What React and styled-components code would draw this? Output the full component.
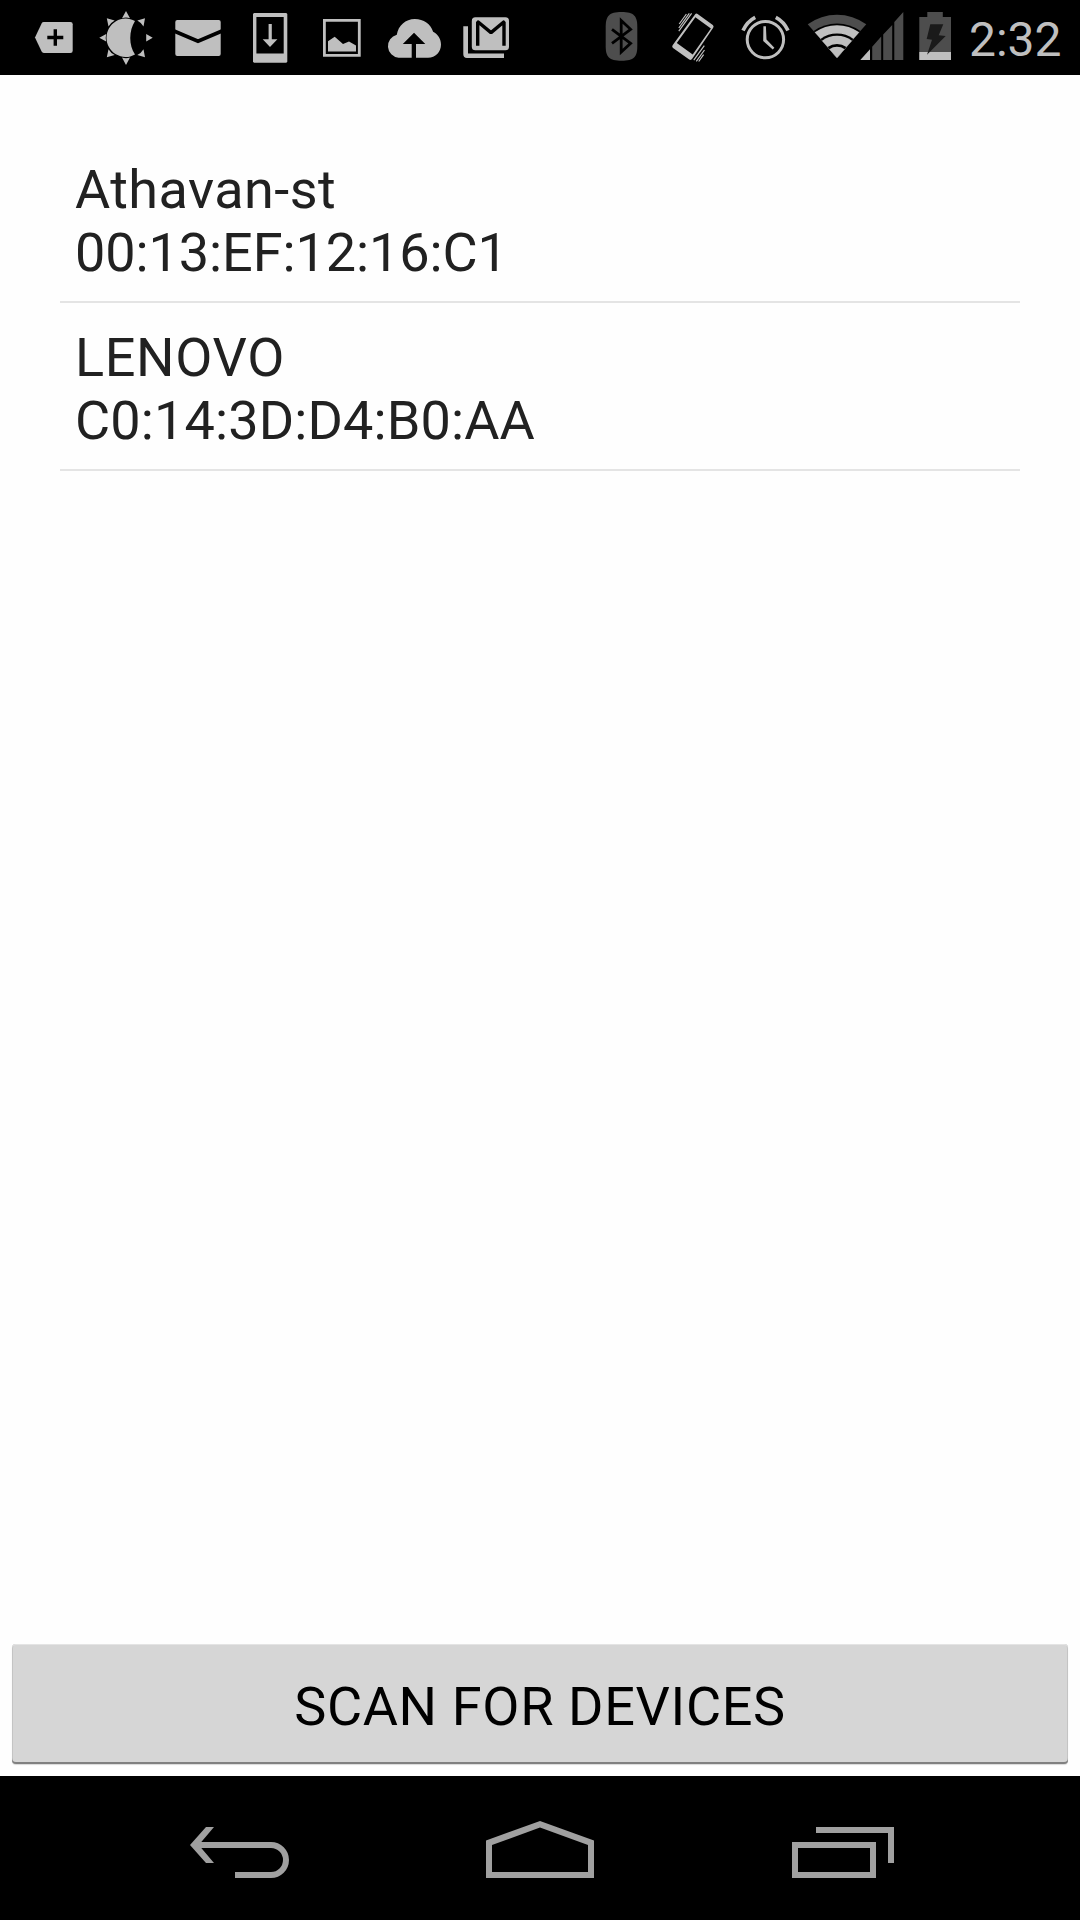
import React from 'react';
import styled, { createGlobalStyle } from 'styled-components';

const GlobalStyle = createGlobalStyle`
  * {
    box-sizing: border-box;
  }

  body {
    margin: 0;
    background: #fefefe;
    font-family: Roboto, "Noto Sans", sans-serif;
  }
`;

const devices = [
  { name: 'Athavan-st', address: '00:13:EF:12:16:C1', nameSpacing: 0.45, addressSpacing: -0.08 },
  { name: 'LENOVO', address: 'C0:14:3D:D4:B0:AA', nameSpacing: 0.65, addressSpacing: 0.14 },
];

// wedge of the wifi fan, r is the distance from its tip to the top of the arc
const wedge = (r) =>
  `M35 58 L${35 - 0.674 * r} ${58 - 0.778 * r} A${1.155 * r} ${1.155 * r} 0 0 1 ${35 + 0.674 * r} ${58 - 0.778 * r} Z`;

const TagIcon = () => (
  <StatusIcon viewBox="0 0 72 75">
    <path d="M17 37.6 L23.6 23.4 Q24.3 22 25.8 22 H52.4 Q54.7 22 54.7 24.3 V50.7 Q54.7 53 52.4 53 H25.8 Q24.3 53 23.6 51.6 Z" />
    <path d="M29.3 37.5 H45.3 M37.3 29.3 V45.7" stroke="#000" strokeWidth="3.4" />
  </StatusIcon>
);

const MoonIcon = () => (
  <StatusIcon viewBox="0 0 72 75">
    <path d="M45 21 C38.7 31 38.7 45 45 54.6 A19.2 19.2 0 1 1 45 21 Z" />
    <path d="M36 11 L40 18.2 Q36 17 32 18.2 Z M36 65 L40 57.6 Q36 58.8 32 57.6 Z" />
    <path d="M9.3 37.8 L16.2 34 Q15.2 37.8 16.2 41.6 Z M62.7 37.8 L56.2 34 V41.6 Z" />
    <path d="M16.8 18.3 L24.7 20.5 Q20.8 22.6 18.5 26.4 Z M55 18.3 L47.3 20.5 Q51.2 22.6 53.5 26.4 Z" />
    <path d="M16.8 57.3 L24.7 55.1 Q20.8 53 18.5 49.2 Z M55 57.3 L47.3 55.1 Q51.2 53 53.5 49.2 Z" />
  </StatusIcon>
);

const MailIcon = () => (
  <StatusIcon viewBox="0 0 72 75">
    <rect x="13.3" y="20" width="45.4" height="36" rx="2" />
    <path d="M12 30.9 L36 41.3 L60 30.9" fill="none" stroke="#000" strokeWidth="3.8" />
  </StatusIcon>
);

const DownloadIcon = () => (
  <StatusIcon viewBox="0 0 72 75">
    <path fillRule="evenodd" d="M20 13 H52.3 L53.3 14 V61.7 L52.3 62.7 H20 L19 61.7 V14 Z M22.4 17 V53.4 H49.7 V17 Z" />
    <path d="M34.6 24 H37.8 V39.3 H43.4 L36 47 L28.7 39.3 H34.6 Z" />
  </StatusIcon>
);

const PictureIcon = () => (
  <StatusIcon viewBox="0 0 72 75">
    <path fillRule="evenodd" d="M17 19 H54.7 V56.7 H17 Z M19.8 21.8 V53.9 H51.9 V21.8 Z" />
    <path d="M22 41.3 L28.7 36.7 L37 44 L43 41.4 L50 45.4 V51.4 H22 Z" />
  </StatusIcon>
);

const CloudIcon = () => (
  <StatusIcon viewBox="0 0 72 75">
    <path d="M20.6 57.7 A11.7 11.7 0 0 1 18.8 34.7 C20.3 25.5 27.6 19 36.8 19 C45.6 19 52.8 24 55.1 31.8 C60 34.3 63 39.3 63 44.5 C63 52 57.5 57.7 50 57.7 H38 V44 H47.3 L36 32.7 L24.8 44 H33.7 V57.7 Z" />
  </StatusIcon>
);

const GmailIcon = () => (
  <StatusIcon viewBox="0 0 72 75">
    <path d="M13.3 26.3 H18 V53.6 H54 V58 H17 Q13.3 58 13.3 54.3 Z" />
    <rect x="21.8" y="17.3" width="37.2" height="33" rx="3.6" />
    <path d="M27.7 45.7 V22 H28.2 L41 32.6 L53.7 22 H54 V45.7" fill="none" stroke="#000" strokeWidth="3.4" strokeLinejoin="bevel" />
  </StatusIcon>
);

const BluetoothIcon = () => (
  <StatusIcon viewBox="0 0 72 75" fill="#4d4d4d">
    <path d="M35.5 12 C48 12 51.3 16 51.3 27 V46 C51.3 57 48 60.7 35.5 60.7 C23 60.7 19.7 57 19.7 46 V27 C19.7 16 23 12 35.5 12 Z" />
    <path d="M26 29.3 L44.6 43.3 L35.2 52 V20.5 L44.6 29.3 L26 43.3" fill="none" stroke="#000" strokeWidth="2.8" />
  </StatusIcon>
);

const VibrateIcon = () => (
  <StatusIcon viewBox="0 0 72 75">
    <path
      fillRule="evenodd"
      d="M37 14.6 Q38 13 39.6 14 L54.8 25 Q56.2 26.2 55.2 27.8 L34.2 58.8 Q33 60.6 31.2 59.4 L15 48 Q13.6 46.8 14.6 45.2 Z M37.4 17.3 L18.8 43 L34.7 54.5 L52.9 28.4 Z"
    />
    <path
      d="M28.4 14 L21.2 24 M31.3 13.4 L20.8 28 M33.6 13.4 L20.8 31.2 M46.3 45.7 L35.8 60.2 M46.5 50 L38.3 61.4 M45.6 54.6 L40.7 61.5"
      fill="none"
      stroke="#bfbfbf"
      strokeWidth="1.2"
    />
  </StatusIcon>
);

const AlarmIcon = () => (
  <StatusIcon viewBox="0 0 72 75">
    <circle cx="35.4" cy="39.6" r="18.2" fill="none" stroke="#bfbfbf" strokeWidth="3" />
    <path d="M33.4 26.2 H35.9 L36.5 39.6 L44.4 47.8 L42.7 49.6 L33.2 41 Z" />
    <path d="M13 30.6 Q17 21.7 25.2 17.4 M58 30.6 Q54 21.7 45.8 17.4" fill="none" stroke="#bfbfbf" strokeWidth="3.6" />
  </StatusIcon>
);

const SignalIcon = () => (
  <WideIcon $width={106} viewBox="0 0 106 75">
    <path d={wedge(43.4)} fill="#4d4d4d" />
    <path d={wedge(34.6)} fill="#000" />
    <path d={wedge(33)} />
    <path d={wedge(24.5)} fill="#000" />
    <path d={wedge(22.3)} />
    <path d={wedge(14)} fill="#000" />
    <path d={wedge(11.3)} />
    <path d="M58.3 60 L68 49.2 V60 Z" />
    <path d="M70.2 60 V46.7 L79.2 36.6 V60 Z M81.2 60 V34.5 L90.2 24.9 V60 Z M92.3 60 V22 L101.3 12 V60 Z" fill="#4d4d4d" />
  </WideIcon>
);

const BatteryIcon = () => (
  <WideIcon $width={60} viewBox="0 0 60 75">
    <path d="M11.3 17 H19.3 V12 H34.8 V17 H43 V60 H11.3 Z" fill="#4d4d4d" />
    <rect x="11.3" y="52" width="31.7" height="8" />
    <path d="M22.3 24.3 H35.3 L30.7 35.3 L37.7 36 L19 54.7 L24 39.7 L18.7 39 Z" fill="#1a1a1a" />
  </WideIcon>
);

const BackIcon = () => (
  <NavIcon viewBox="0 0 300 144">
    <path d="M100 69 L116 51 H124 L111.3 66 H181 A18 18 0 0 1 181 102 H145 V96 H181 A12 12 0 0 0 181 72 H111.3 L124 87 H116 Z" />
  </NavIcon>
);

const HomeIcon = () => (
  <NavIcon viewBox="0 0 300 144">
    <path fillRule="evenodd" d="M96 64.4 L150 45 L204 64.4 V102 H96 Z M102 69 V96 H198 V69 L150 51.5 Z" />
  </NavIcon>
);

const RecentsIcon = () => (
  <NavIcon viewBox="0 0 300 144">
    <path fillRule="evenodd" d="M102 66 H186 V102 H102 Z M108 72 V96 H180 V72 Z" />
    <path d="M126 51 H204 V87 H198 V57 H126 Z" />
  </NavIcon>
);

const App = () => {
  return (
    <Screen>
      <GlobalStyle />
      <StatusBar>
        <IconGroup>
          <TagIcon />
          <MoonIcon />
          <MailIcon />
          <DownloadIcon />
          <PictureIcon />
          <CloudIcon />
          <GmailIcon />
        </IconGroup>
        <IconGroup>
          <BluetoothIcon />
          <VibrateIcon />
          <AlarmIcon />
          <SignalIcon />
          <BatteryIcon />
          <Clock>2:32</Clock>
        </IconGroup>
      </StatusBar>

      <Content>
        <DeviceList>
          {devices.map((device) => (
            <DeviceRow key={device.address}>
              <DeviceText $spacing={device.nameSpacing}>{device.name}</DeviceText>
              <DeviceText $spacing={device.addressSpacing}>{device.address}</DeviceText>
            </DeviceRow>
          ))}
        </DeviceList>
        <ScanButton>SCAN FOR DEVICES</ScanButton>
      </Content>

      <NavBar>
        <BackIcon />
        <HomeIcon />
        <RecentsIcon />
      </NavBar>
    </Screen>
  );
};

//#region Styles
const Screen = styled.div`
  display: flex;
  flex-direction: column;
  width: 1080px;
  height: 1920px;
  overflow: hidden;
`;

const StatusBar = styled.header`
  display: flex;
  justify-content: space-between;
  height: 75px;
  padding: 0 18px;
  background: #000;
`;

const IconGroup = styled.div`
  display: flex;
  align-items: center;
`;

const StatusIcon = styled.svg.attrs((props) => ({ fill: props.fill || '#bfbfbf' }))`
  display: block;
  flex: none;
  width: 72px;
  height: 75px;
`;

const WideIcon = styled(StatusIcon)`
  width: ${(props) => props.$width}px;
`;

const Clock = styled.span`
  width: 94px;
  height: 75px;
  padding: 2px 0 0 1px;
  color: #bfbfbf;
  font-size: 48px;
  line-height: 75px;
  white-space: nowrap;
`;

const Content = styled.main`
  display: flex;
  flex: 1;
  flex-direction: column;
  justify-content: space-between;
  padding: 60px 12px 12px;
`;

const DeviceList = styled.ul`
  margin: 0 48px;
  padding: 0;
  list-style: none;
`;

const DeviceRow = styled.li`
  height: 168px;
  padding: 23px 15px 0;
  border-bottom: 2px solid #e4e4e4;
`;

const DeviceText = styled.div`
  color: #212121;
  font-size: 54px;
  line-height: 63px;
  letter-spacing: ${(props) => props.$spacing}px;
  white-space: nowrap;
`;

const ScanButton = styled.button`
  height: 120px;
  padding: 5px 0 0;
  border: 0;
  border-radius: 4px;
  background: #d6d6d6;
  box-shadow: inset 0 -2px 0 #808080, inset 0 1px 0 #e4e4e4, inset 1px 0 0 #c4c4c4,
    inset -1px 0 0 #c4c4c4, 0 1px 1px rgba(0, 0, 0, 0.15);
  color: #000;
  font-family: inherit;
  font-size: 54px;
  line-height: 63px;
  letter-spacing: 0.65px;
`;

const NavBar = styled.nav`
  display: flex;
  justify-content: center;
  height: 144px;
  background: #000;
`;

const NavIcon = styled.svg`
  display: block;
  width: 300px;
  height: 144px;
  fill: #a0a0a0;
`;
//#endregion

export default App;
